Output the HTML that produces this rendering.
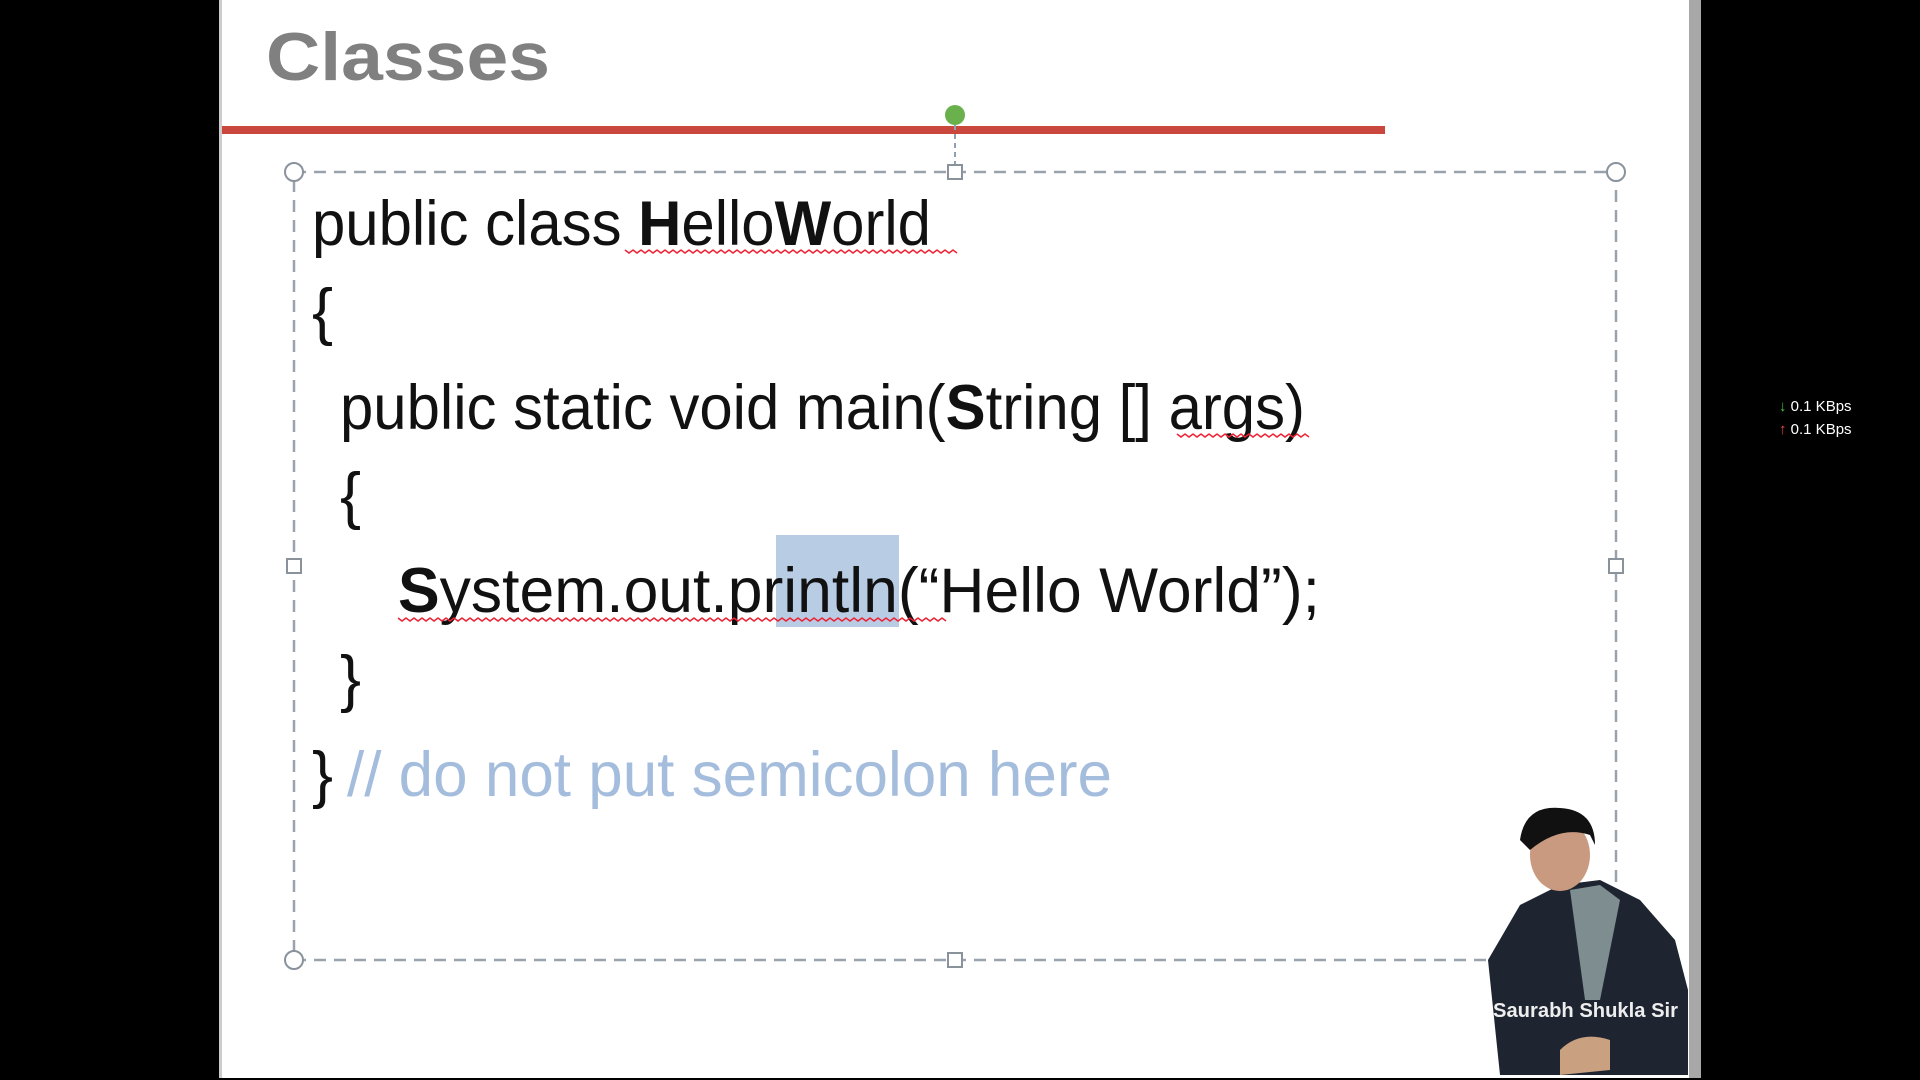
<!DOCTYPE html>
<html><head><meta charset="utf-8"><style>
html,body{margin:0;padding:0;background:#000;width:1920px;height:1080px;overflow:hidden}
svg{display:block}
</style></head><body>
<svg width="1920" height="1080" xmlns="http://www.w3.org/2000/svg" font-family="Liberation Sans, sans-serif">
<rect width="1920" height="1080" fill="#000"/>
<rect x="219" y="0" width="1472" height="1078" fill="#fff"/>
<rect x="1689" y="0" width="12" height="1078" fill="#a8a8a8"/>
<rect x="219" y="0" width="3" height="1078" fill="#ccc"/>
<text x="266" y="80" font-size="68" font-weight="bold" fill="#808080" textLength="284" lengthAdjust="spacingAndGlyphs">Classes</text>
<rect x="222" y="126" width="1163" height="8" fill="#c9473d"/>
<line x1="955" y1="125" x2="955" y2="168" stroke="#8fa0b5" stroke-width="2" stroke-dasharray="5,4"/>
<circle cx="955" cy="115" r="10" fill="#6ab04c"/>
<rect x="294" y="172" width="1322" height="788" fill="none" stroke="#9aa3ad" stroke-width="2.5" stroke-dasharray="12,8"/>
<g fill="#fff" stroke="#8a929c" stroke-width="2">
<circle cx="294" cy="172" r="9"/><circle cx="1616" cy="172" r="9"/>
<circle cx="294" cy="960" r="9"/><circle cx="1616" cy="960" r="9"/>
<rect x="948" y="165" width="14" height="14"/><rect x="948" y="953" width="14" height="14"/>
<rect x="287" y="559" width="14" height="14"/><rect x="1609" y="559" width="14" height="14"/>
</g>
<rect x="776" y="535" width="123" height="92" fill="#b8cce4"/>
<g font-size="63" fill="#111">
<text x="312" y="245" textLength="619" lengthAdjust="spacingAndGlyphs">public class <tspan font-weight="bold">H</tspan>ello<tspan font-weight="bold">W</tspan>orld</text>
<text x="312" y="333">{</text>
<text x="340" y="429" textLength="965" lengthAdjust="spacingAndGlyphs">public static void main(<tspan font-weight="bold">S</tspan>tring [] args)</text>
<text x="340" y="517">{</text>
<text x="398" y="612" textLength="922" lengthAdjust="spacingAndGlyphs"><tspan font-weight="bold">S</tspan>ystem.out.println(“Hello World”);</text>
<text x="340" y="700">}</text>
<text x="312" y="796">}</text>
<text x="347" y="796" fill="#a5bddd" textLength="765" lengthAdjust="spacingAndGlyphs">// do not put semicolon here</text>
</g>
<g stroke="#e23" stroke-width="1.5" fill="none">
<path d="M625 250 l4 3 4-3 4 3 4-3 4 3 4-3 4 3 4-3 4 3 4-3 4 3 4-3 4 3 4-3 4 3 4-3 4 3 4-3 4 3 4-3 4 3 4-3 4 3 4-3 4 3 4-3 4 3 4-3 4 3 4-3 4 3 4-3 4 3 4-3 4 3 4-3 4 3 4-3 4 3 4-3 4 3 4-3 4 3 4-3 4 3 4-3 4 3 4-3 4 3 4-3 4 3 4-3 4 3 4-3 4 3 4-3 4 3 4-3 4 3 4-3 4 3 4-3 4 3 4-3 4 3 4-3 4 3 4-3 4 3 4-3 4 3 4-3 4 3 4-3 4 3 4-3 4 3 4-3 4 3 4-3 4 3 4-3 4 3"/>
<path d="M1177 434 l4 3 4-3 4 3 4-3 4 3 4-3 4 3 4-3 4 3 4-3 4 3 4-3 4 3 4-3 4 3 4-3 4 3 4-3 4 3 4-3 4 3 4-3 4 3 4-3 4 3 4-3 4 3 4-3 4 3 4-3 4 3 4-3 4 3"/>
<path d="M398 618 l4 3 4-3 4 3 4-3 4 3 4-3 4 3 4-3 4 3 4-3 4 3 4-3 4 3 4-3 4 3 4-3 4 3 4-3 4 3 4-3 4 3 4-3 4 3 4-3 4 3 4-3 4 3 4-3 4 3 4-3 4 3 4-3 4 3 4-3 4 3 4-3 4 3 4-3 4 3 4-3 4 3 4-3 4 3 4-3 4 3 4-3 4 3 4-3 4 3 4-3 4 3 4-3 4 3 4-3 4 3 4-3 4 3 4-3 4 3 4-3 4 3 4-3 4 3 4-3 4 3 4-3 4 3 4-3 4 3 4-3 4 3 4-3 4 3 4-3 4 3 4-3 4 3 4-3 4 3 4-3 4 3 4-3 4 3 4-3 4 3 4-3 4 3 4-3 4 3 4-3 4 3 4-3 4 3 4-3 4 3 4-3 4 3 4-3 4 3 4-3 4 3 4-3 4 3 4-3 4 3 4-3 4 3 4-3 4 3 4-3 4 3 4-3 4 3 4-3 4 3 4-3 4 3 4-3 4 3 4-3 4 3 4-3 4 3 4-3 4 3 4-3 4 3 4-3 4 3 4-3 4 3 4-3 4 3 4-3 4 3 4-3 4 3"/>
</g>
<g>
<path d="M1500 1075 L1488 960 L1520 905 L1560 885 L1600 880 L1640 900 L1675 940 L1688 990 L1688 1075 Z" fill="#1e2430"/>
<path d="M1570 890 L1600 885 L1620 900 L1600 1000 L1585 1000 Z" fill="#7d8d90"/>
<ellipse cx="1560" cy="855" rx="30" ry="36" fill="#c99a80"/>
<path d="M1520 840 Q1525 805 1560 808 Q1595 810 1595 845 L1590 835 Q1560 825 1530 850 Z" fill="#111"/>
<path d="M1560 1050 Q1580 1030 1610 1040 L1610 1070 L1560 1075 Z" fill="#c9a080"/>
<text x="1493" y="1017" font-size="20" font-weight="bold" fill="#eee" textLength="185" lengthAdjust="spacingAndGlyphs">Saurabh Shukla Sir</text>
</g>
<text x="1779" y="411" font-size="15" fill="#fff"><tspan fill="#4c4">↓</tspan> 0.1 KBps</text>
<text x="1779" y="434" font-size="15" fill="#fff"><tspan fill="#e44">↑</tspan> 0.1 KBps</text>
</svg>
</body></html>
